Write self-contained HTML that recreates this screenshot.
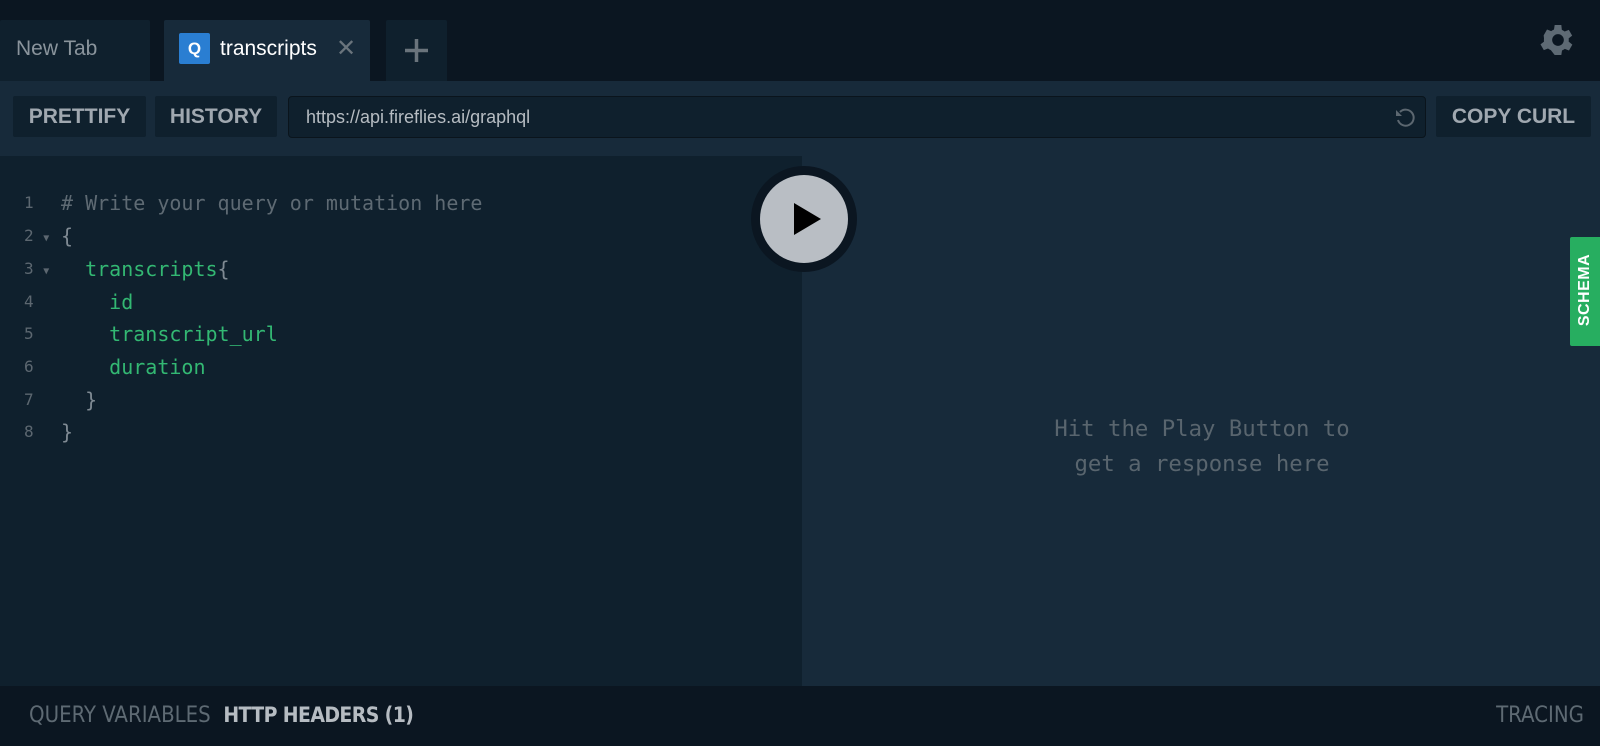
<!DOCTYPE html>
<html><head><style>
*{margin:0;padding:0;box-sizing:border-box}
body{width:1600px;height:746px;background:#0b1621;font-family:"Liberation Sans",sans-serif;position:relative;overflow:hidden}
.abs{position:absolute}
.tab{position:absolute;top:20px;height:61px;background:#0f202d;border-radius:2px 2px 0 0}
.btn{position:absolute;top:96px;height:41px;background:#0f202d;border-radius:2px;color:#a0a8b0;font-weight:bold;font-size:21px;line-height:41px;text-align:center}
.mono{font-family:"DejaVu Sans Mono","Liberation Mono",monospace;font-size:20px}
.ln{position:absolute;left:24px;color:#5c6770;font-size:16px}
.code{position:absolute;left:61px;white-space:pre}
.bt{font-family:'DejaVu Sans Condensed','DejaVu Sans',sans-serif;font-size:22px}
</style></head><body>
<div class="tab" style="left:0;width:150px"><span class="abs" style="left:16px;top:17px;color:#8a949c;font-size:21px">New Tab</span></div>
<div class="tab" style="left:164px;width:206px;background:#172a3a">
 <div class="abs" style="left:15px;top:13px;width:31px;height:31px;background:#2a7ed2;border-radius:2px;color:#fff;font-weight:bold;font-size:17px;text-align:center;line-height:31px">Q</div>
 <span class="abs" style="left:56px;top:17px;color:#fff;font-size:21px">transcripts</span>
 <span class="abs" style="left:172px;top:14px;color:#6a747c;font-size:24px">✕</span>
</div>
<div class="tab" style="left:386px;width:61px"><svg class="abs" style="left:17px;top:17px" width="27" height="27"><path d="M13.5 2V25M2 13.5H25" stroke="#6a747c" stroke-width="3.5"/></svg></div>
<svg class="abs" style="left:1538px;top:20px" width="40" height="40" viewBox="0 0 24 24"><path fill="#5e6a74" d="M19.4 13a7.5 7.5 0 0 0 0-2l2.1-1.6-2-3.5-2.5 1a7 7 0 0 0-1.7-1L15 3h-4l-.4 2.7a7 7 0 0 0-1.7 1l-2.5-1-2 3.5L4.6 11a7.5 7.5 0 0 0 0 2l-2.1 1.6 2 3.5 2.5-1a7 7 0 0 0 1.7 1L11 21h4l.4-2.7a7 7 0 0 0 1.7-1l2.5 1 2-3.5zM13 15.5a3.5 3.5 0 1 1 0-7 3.5 3.5 0 0 1 0 7z" transform="translate(-1 0)"/></svg>
<div class="abs" style="left:0;top:81px;width:1600px;height:75px;background:#172a3a"></div>
<div class="btn" style="left:13px;width:133px">PRETTIFY</div>
<div class="btn" style="left:155px;width:122px">HISTORY</div>
<div class="abs" style="left:288px;top:96px;width:1138px;height:42px;background:#0f202d;border:1px solid #0a141c;border-radius:4px"><span class="abs" style="left:17px;top:10px;color:#b6bcc2;font-size:18px">https://api.fireflies.ai/graphql</span>
<svg class="abs" style="left:1104px;top:9px" width="24" height="24" viewBox="0 0 24 24"><path d="M7 6A8 8 0 1 1 5 14" fill="none" stroke="#5c6770" stroke-width="2"/><path d="M3 4v6h6z" fill="#5c6770"/></svg></div>
<div class="btn" style="left:1436px;width:155px">COPY CURL</div>
<div class="abs" style="left:0;top:156px;width:802px;height:530px;background:#0f202d"></div>
<div class="abs" style="left:802px;top:156px;width:798px;height:530px;background:#172a3a"></div>
<div class="mono">
<div class="ln" style="top:193px">1</div><div class="code" style="top:191px;color:#5e6a73"># Write your query or mutation here</div>
<div class="ln" style="top:226px">2 <span style="font-size:10px">▼</span></div><div class="code" style="top:224px;color:#7f8a93">{</div>
<div class="ln" style="top:259px">3 <span style="font-size:10px">▼</span></div><div class="code" style="top:257px;color:#33b873">  transcripts<span style="color:#7f8a93">{</span></div>
<div class="ln" style="top:292px">4</div><div class="code" style="top:290px;color:#33b873">    id</div>
<div class="ln" style="top:324px">5</div><div class="code" style="top:322px;color:#33b873">    transcript_url</div>
<div class="ln" style="top:357px">6</div><div class="code" style="top:355px;color:#33b873">    duration</div>
<div class="ln" style="top:390px">7</div><div class="code" style="top:388px;color:#7f8a93">  }</div>
<div class="ln" style="top:422px">8</div><div class="code" style="top:420px;color:#7f8a93">}</div>
<div class="abs" style="left:902px;top:412px;width:600px;text-align:center;color:#59656e;font-size:22.3px;line-height:35px">Hit the Play Button to<br>get a response here</div>
</div>
<div class="abs" style="left:751px;top:166px;width:106px;height:106px;border-radius:50%;background:#0b1621"></div>
<div class="abs" style="left:760px;top:175px;width:88px;height:88px;border-radius:50%;background:#b9bec4"></div>
<svg class="abs" style="left:794px;top:203px" width="28" height="32"><path d="M0 0L27 16L0 32z" fill="#000"/></svg>
<div class="abs" style="left:1570px;top:237px;width:32px;height:109px;background:#27ae60;border-radius:2px 0 0 2px"><span class="abs" style="left:-30px;top:44px;width:90px;text-align:center;transform:rotate(-90deg);color:#fff;font-weight:bold;font-size:16px;letter-spacing:.5px">SCHEMA</span></div>
<div class="abs bt" style="left:29px;top:703px;color:#5e6a73">QUERY VARIABLES&nbsp; <span style="color:#b6bcc2;font-weight:bold;font-size:21px;letter-spacing:-0.6px">HTTP HEADERS (1)</span></div>
<div class="abs bt" style="right:16px;top:703px;color:#5e6a73">TRACING</div>
</body></html>
